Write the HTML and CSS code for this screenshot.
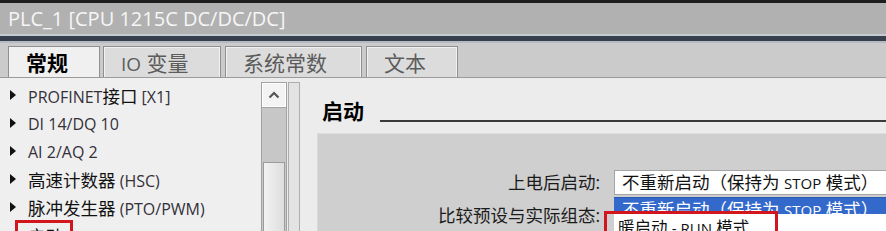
FILE: index.html
```html
<!DOCTYPE html>
<html lang="zh-CN">
<head>
<meta charset="utf-8">
<title>PLC_1</title>
<link rel="stylesheet" href="styles.css">
</head>
<body>
<div class="app">
  <div class="topline"></div>
  <div class="titlebar">PLC_1 [CPU 1215C DC/DC/DC]</div>
  <div class="sep"></div>
  <div class="tabstrip">
    <div class="tab tab-active"><span>常规</span></div>
    <div class="tab tab-2"><span><span class="lat-tab">IO</span> 变量</span></div>
    <div class="tab tab-3"><span>系统常数</span></div>
    <div class="tab tab-4"><span>文本</span></div>
  </div>
  <div class="main">
    <div class="nav">
      <ul class="tree">
        <li class="node"><span class="tri"></span><span class="txt"><span class="lat">PROFINET</span>接口<span class="lat"> [X1]</span></span></li>
        <li class="node"><span class="tri"></span><span class="txt"><span class="lat">DI 14/DQ 10</span></span></li>
        <li class="node"><span class="tri"></span><span class="txt"><span class="lat">AI 2/AQ 2</span></span></li>
        <li class="node"><span class="tri"></span><span class="txt">高速计数器<span class="lat"> (HSC)</span></span></li>
        <li class="node"><span class="tri"></span><span class="txt">脉冲发生器<span class="lat"> (PTO/PWM)</span></span></li>
        <li class="node leaf"><span class="txt">启动</span></li>
      </ul>
      <div class="mark mark-nav"></div>
    </div>
    <div class="scrollbar">
      <div class="sb-frame">
        <div class="sb-up">
          <svg class="caret" width="12" height="8" viewBox="0 0 12 8"><polyline points="1.5,6.5 6,2 10.5,6.5" fill="none" stroke="#555" stroke-width="2.2"/></svg>
        </div>
        <div class="sb-track"></div>
        <div class="sb-thumb"></div>
      </div>
    </div>
    <div class="splitter"></div>
    <div class="content">
      <div class="section-head"><span class="section-title">启动</span><span class="rule"></span></div>
      <div class="group">
        <div class="form">
          <div class="label">上电后启动:</div>
          <div class="select">不重新启动（保持为 <span class="lat-s">STOP</span> 模式）
            <div class="menu">
              <div class="opt opt-sel">不重新启动（保持为 <span class="lat-s">STOP</span> 模式）</div>
              <div class="opt opt-next">暖启动 <span class="lat-s">- RUN</span> 模式</div>
            </div>
            <div class="mark mark-opt"></div>
          </div>
          <div class="label">比较预设与实际组态:</div>
          <div class="cell"></div>
        </div>
      </div>
    </div>
  </div>
</div>
</body>
</html>
```

FILE: styles.css
```css
* { box-sizing: border-box; margin: 0; padding: 0; }
html, body { width: 886px; height: 231px; overflow: hidden; }
body {
  font-family: "Open Sans", "Noto Sans CJK SC", sans-serif;
  background: #ececec;
  color: #111;
}
.app { display: flex; flex-direction: column; height: 231px; }

.topline { flex: none; height: 3px; background: #1d1d1d; }
.titlebar {
  flex: none; height: 31px; background: #b1b1b1; color: #f6f6f6;
  font-size: 20px; line-height: 31px; padding-left: 8px; white-space: nowrap;
}
.sep {
  flex: none; height: 9px;
  background: linear-gradient(#c6cad1 0 2px, #373f4c 2px 7px, #b4b9c2 7px 9px);
}

.tabstrip {
  flex: none; height: 35px; background: #cbcbcb; border-bottom: 1px solid #9b9b9b;
  display: flex; align-items: flex-end; padding-left: 8px;
}
.tab {
  height: 31px; border: 1px solid #8f8f8f; border-bottom: none;
  background: #dcdcdc; box-shadow: inset 1px 1px 0 #f2f2f2, inset -1px 0 0 #f2f2f2;
  display: flex; align-items: center; padding-left: 17px;
  font-size: 21px; color: #5c5c5c; white-space: nowrap;
}
.tab-active { width: 92px; background: #f0f0f0; color: #000; font-weight: bold; }
.tab-2 { width: 118px; margin-left: 3px; }
.tab-3 { width: 137px; margin-left: 4px; }
.tab-4 { width: 92px; margin-left: 4px; }
.lat-tab { font-size: 19px; }

.main { flex: 1; display: flex; min-height: 0; }

.nav { position: relative; flex: none; width: 261px; background: #efefef; padding-top: 3px; }
.tree { list-style: none; }
.node {
  height: 28px; display: flex; align-items: center; padding-left: 10px;
  font-size: 17.5px; color: #111; white-space: nowrap;
}
.node.leaf { padding-left: 28px; }
.tri {
  flex: none; width: 0; height: 0; margin-right: 12px;
  border-left: 6px solid #111; border-top: 5px solid transparent; border-bottom: 5px solid transparent;
}
.lat { font-size: 16px; color: #34303a; }

.scrollbar { flex: none; width: 26px; padding-top: 4px; display: flex; flex-direction: column; }
.sb-frame {
  flex: 1; display: flex; flex-direction: column;
  border: 1px solid #a2a2a2; border-bottom: none; background: #c7c7c7;
}
.sb-up {
  flex: none; height: 25px; background: #f3f3f3;
  border-bottom: 1px solid #a2a2a2; box-shadow: inset 0 0 0 1px #ffffff;
  display: flex; align-items: center; justify-content: center;
}
.sb-track { flex: none; height: 54px; }
.sb-thumb {
  flex: 1; margin: 0 1px; border: 1px solid #9c9c9c; border-bottom: none;
  background: linear-gradient(90deg, #f2f2f2, #dedede);
}

.splitter {
  flex: none; width: 12px; margin: 4px 0 0 1px;
  border: 1px solid #adadad; border-bottom: none; background: #e3e3e3;
}

.content { flex: 1; min-width: 0; display: flex; flex-direction: column; overflow: hidden; }
.section-head { flex: none; height: 30px; margin-top: 18px; padding-left: 22px; display: flex; }
.section-title { font-size: 21px; font-weight: bold; line-height: 30px; color: #000; }
.rule { flex: 1; height: 2px; margin: 24px 0 0 16px; background: #3a3a3a; }

.group {
  flex: 1; margin: 7px 0 0 17px; background: #cfcfcf;
  border-top: 1px solid #dedede; border-left: 1px solid #d9d9d9;
  padding-top: 36px;
}
.form { display: grid; grid-template-columns: 282px 1fr; grid-auto-rows: 25px; column-gap: 14px; row-gap: 8px; }
.label { text-align: right; font-size: 17.5px; line-height: 25px; color: #1b1b1b; white-space: nowrap; }

.select {
  position: relative; height: 25px; background: #fff;
  border: 1px solid #a5a5a5; border-right: none;
  padding-left: 7px; font-size: 17.5px; line-height: 23px; color: #111; white-space: nowrap;
}
.lat-s { font-size: 15px; }
.menu { position: absolute; left: -1px; top: 26px; width: 300px; background: #fff; }
.opt { height: 20px; padding-left: 8px; line-height: 28px; white-space: nowrap; overflow: hidden; color: #111; }
.opt-sel { height: 17px; line-height: 22px; background: #3469cc; color: #fff; border-top: 1px solid #2b58b0; }
.opt-next { padding-left: 4px; font-size: 16.5px; }

.mark { position: absolute; border: 3px solid #d3161d; pointer-events: none; }
.mark-nav { left: 15px; top: 142px; width: 58px; height: 30px; }
.mark-opt { left: -11px; top: 40px; width: 174px; height: 32px; }
```
